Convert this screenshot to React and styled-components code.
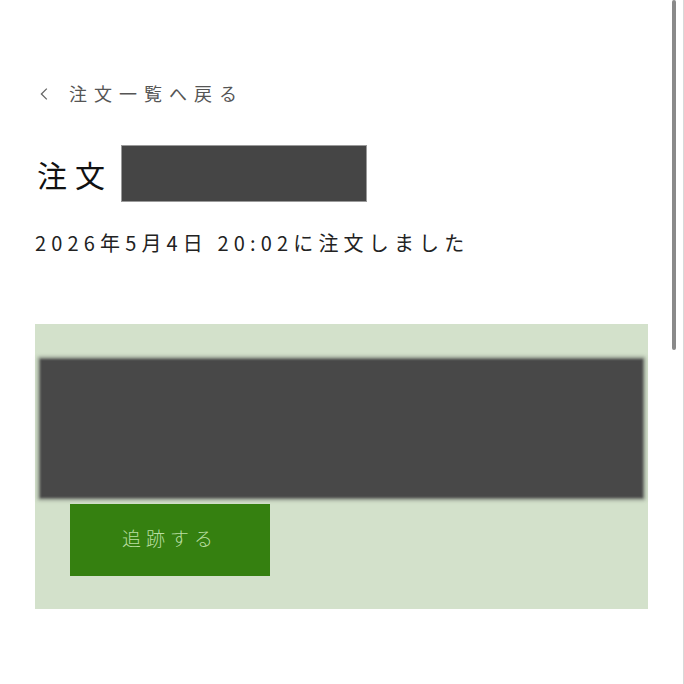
import React from 'react';
import styled, { createGlobalStyle } from 'styled-components';

const GlobalStyle = createGlobalStyle`
  html, body {
    margin: 0;
    padding: 0;
    background: #fff;
  }
  body {
    font-family: "Noto Sans CJK JP", "Noto Sans", sans-serif;
    color: #222;
  }
`;

const ChevronLeft = () => (
  <svg width="8" height="12" viewBox="0 0 8 12" fill="none">
    <path d="M6.8 0.6 L1.4 6 L6.8 11.4" stroke="#666" strokeWidth="1.3" />
  </svg>
);

const App = () => {
  return (
    <>
      <GlobalStyle />
      <Page>
        <Content>
          <BackLink href="#">
            <ChevronLeft />
            <span>注文一覧へ戻る</span>
          </BackLink>
          <TitleRow>
            <Title>注文</Title>
            <Redacted $width={246} $height={57} />
          </TitleRow>
          <OrderedAt>2026年5月4日 20:02に注文しました</OrderedAt>
          <StatusPanel>
            <StatusBlock />
            <TrackButton>追跡する</TrackButton>
          </StatusPanel>
        </Content>
        <Scrollbar />
        <EdgeLine />
      </Page>
    </>
  );
};

const Page = styled.div`
  position: relative;
  width: 684px;
  height: 684px;
  overflow: hidden;
  background: #fff;
`;

const Content = styled.div`
  display: flex;
  flex-direction: column;
  align-items: flex-start;
  padding: 80px 36px 0 35px;
`;

const BackLink = styled.a`
  display: flex;
  align-items: center;
  gap: 21px;
  padding-left: 5px;
  font-size: 18px;
  letter-spacing: 7px;
  color: #555;
  text-decoration: none;

  svg {
    margin-top: 2px;
  }
`;

const TitleRow = styled.div`
  display: flex;
  align-items: center;
  gap: 8px;
  margin-top: 39px;
  padding-left: 2px;
`;

const Title = styled.h1`
  margin: 0;
  font-size: 30px;
  font-weight: 400;
  letter-spacing: 8px;
  color: #111;
`;

const Redacted = styled.div`
  width: ${({ $width }) => $width}px;
  height: ${({ $height }) => $height}px;
  background: #454545;
  border: 1px solid #9a9a9a;
  box-sizing: border-box;
`;

const OrderedAt = styled.p`
  margin: 26px 0 0;
  font-size: 20px;
  letter-spacing: 5.15px;
  color: #222;
`;

const StatusPanel = styled.section`
  display: flex;
  flex-direction: column;
  align-items: flex-start;
  gap: 6px;
  margin-top: 67px;
  padding: 35px 5px 33px;
  background: #d3e1cb;
  width: 613px;
  box-sizing: border-box;
`;

const StatusBlock = styled.div`
  align-self: stretch;
  height: 139px;
  background: #484848;
  box-shadow: 0 0 3px 2px rgba(70, 70, 70, 0.55);
  filter: blur(1.2px);
`;

const TrackButton = styled.button`
  margin-left: 30px;
  width: 200px;
  height: 72px;
  padding-bottom: 6px;
  border: none;
  background: #358010;
  color: #b9dea2;
  font-family: "Noto Sans CJK JP", sans-serif;
  font-size: 19px;
  font-weight: 300;
  letter-spacing: 5px;
  cursor: pointer;
`;

const Scrollbar = styled.div`
  position: absolute;
  top: 0;
  right: 8px;
  width: 4px;
  height: 350px;
  border-radius: 2px;
  background: #8a8a8a;
`;

const EdgeLine = styled.div`
  position: absolute;
  top: 0;
  right: 0;
  width: 1px;
  height: 100%;
  background: #d8d8d8;
`;

export default App;
